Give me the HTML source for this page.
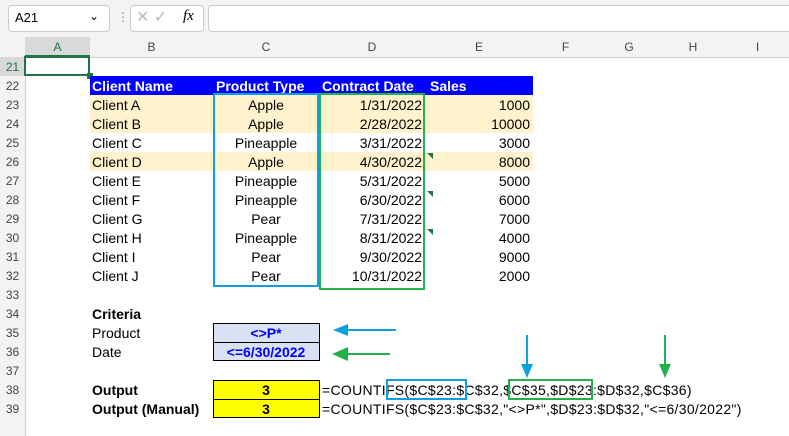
<!DOCTYPE html>
<html><head><style>
body{margin:0;width:789px;height:436px;overflow:hidden;background:#fff;font-family:"Liberation Sans",Arial,sans-serif;position:relative}
.a{position:absolute}
.t{position:absolute;font-size:14px;line-height:19px;white-space:nowrap;margin-top:1px}
.r{text-align:right}.c{text-align:center}.b{font-weight:bold}
.rh{position:absolute;left:0;width:25px;text-align:center;font-size:12px;color:#444;line-height:19px}
.ch{position:absolute;top:37px;height:20px;line-height:20px;text-align:center;font-size:12px;color:#444}
</style></head><body>
<div class="a" style="left:0;top:0;width:789px;height:37px;background:#f3f3f3"></div>
<div class="a" style="left:8px;top:5px;width:100px;height:25px;background:#fff;border:1px solid #ccc;border-radius:4px"></div>
<div class="t" style="left:15px;top:7px;font-size:13px">A21</div>
<div class="t" style="left:89px;top:6px;font-size:12px">&#8964;</div>
<div class="t" style="left:117px;top:7px;color:#888;font-size:12px">⋮</div>
<div class="a" style="left:130px;top:5px;width:72px;height:25px;background:#fff;border:1px solid #ccc;border-radius:4px"></div>
<div class="t" style="left:136px;top:7px;color:#bbb;font-size:16px">✕ ✓</div>
<div class="t" style="left:183px;top:6px;font-family:'Liberation Serif',serif;font-style:italic;font-size:15px">fx</div>
<div class="a" style="left:208px;top:5px;width:585px;height:25px;background:#fff;border:1px solid #ccc;border-radius:4px"></div>
<div class="a" style="left:0;top:37px;width:789px;height:20px;background:#f3f3f3;border-bottom:1px solid #d0d0d0"></div>
<div class="a" style="left:0;top:57px;width:25px;height:379px;background:#f3f3f3;border-right:1px solid #d0d0d0"></div>
<div class="a" style="left:25px;top:37px;width:65px;height:20px;background:#d9d9d9;border-bottom:2px solid #217346;box-sizing:border-box"></div>
<div class="ch" style="left:25px;width:65px;color:#217346">A</div>
<div class="ch" style="left:90px;width:123px">B</div>
<div class="ch" style="left:213px;width:106px">C</div>
<div class="ch" style="left:319px;width:106px">D</div>
<div class="ch" style="left:425px;width:108px">E</div>
<div class="ch" style="left:533px;width:65px">F</div>
<div class="ch" style="left:598px;width:62px">G</div>
<div class="ch" style="left:660px;width:66px">H</div>
<div class="ch" style="left:726px;width:63px">I</div>
<div class="a" style="left:0;top:57px;width:25px;height:19px;background:#d9d9d9"></div>
<div class="rh" style="top:58px;color:#217346">21</div><div class="rh" style="top:77px">22</div><div class="rh" style="top:96px">23</div><div class="rh" style="top:115px">24</div><div class="rh" style="top:134px">25</div><div class="rh" style="top:153px">26</div><div class="rh" style="top:172px">27</div><div class="rh" style="top:191px">28</div><div class="rh" style="top:210px">29</div><div class="rh" style="top:229px">30</div><div class="rh" style="top:248px">31</div><div class="rh" style="top:267px">32</div><div class="rh" style="top:286px">33</div><div class="rh" style="top:305px">34</div><div class="rh" style="top:324px">35</div><div class="rh" style="top:343px">36</div><div class="rh" style="top:362px">37</div><div class="rh" style="top:381px">38</div><div class="rh" style="top:400px">39</div>
<div class="a" style="left:24px;top:56px;width:66px;height:20px;border:2px solid #217346;box-sizing:border-box"></div>
<div class="a" style="left:87px;top:73px;width:6px;height:6px;background:#217346"></div>
<div class="a" style="left:90px;top:76px;width:443px;height:19px;background:#0000ff"></div>
<div class="a" style="left:90px;top:95px;width:443px;height:38px;background:#fff2cc"></div>
<div class="a" style="left:90px;top:152px;width:443px;height:19px;background:#fff2cc"></div>
<div class="t b" style="left:92px;top:76px;color:#fff">Client Name</div>
<div class="t b" style="left:216px;top:76px;color:#fff">Product Type</div>
<div class="t b" style="left:322px;top:76px;color:#fff">Contract Date</div>
<div class="t b" style="left:430px;top:76px;color:#fff">Sales</div>
<div class="t" style="left:92px;top:95px">Client A<br>Client B<br>Client C<br>Client D<br>Client E<br>Client F<br>Client G<br>Client H<br>Client I<br>Client J</div>
<div class="t c" style="left:213px;top:95px;width:106px">Apple<br>Apple<br>Pineapple<br>Apple<br>Pineapple<br>Pineapple<br>Pear<br>Pineapple<br>Pear<br>Pear</div>
<div class="t r" style="left:319px;top:95px;width:103px">1/31/2022<br>2/28/2022<br>3/31/2022<br>4/30/2022<br>5/31/2022<br>6/30/2022<br>7/31/2022<br>8/31/2022<br>9/30/2022<br>10/31/2022</div>
<div class="t r" style="left:425px;top:95px;width:105px">1000<br>10000<br>3000<br>8000<br>5000<br>6000<br>7000<br>4000<br>9000<br>2000</div>
<div class="a" style="left:213px;top:93px;width:106px;height:194px;border:2px solid #0ca0e0;box-sizing:border-box"></div>
<div class="a" style="left:319px;top:93px;width:106px;height:197px;border:2px solid #22b14c;box-sizing:border-box"></div>
<div class="a" style="left:427px;top:153px;border-top:6px solid #217346;border-left:6px solid transparent"></div>
<div class="a" style="left:427px;top:191px;border-top:6px solid #217346;border-left:6px solid transparent"></div>
<div class="a" style="left:427px;top:229px;border-top:6px solid #217346;border-left:6px solid transparent"></div>
<div class="t b" style="left:92px;top:304px">Criteria</div>
<div class="t" style="left:92px;top:323px">Product<br>Date</div>
<div class="a" style="left:213px;top:323px;width:107px;height:38px;background:#d9e1f2;border:1px solid #000;box-sizing:border-box"></div>
<div class="a" style="left:213px;top:342px;width:107px;height:1px;background:#000"></div>
<div class="t b c" style="left:213px;top:323px;width:106px;color:#0000ff">&lt;&gt;P*<br>&lt;=6/30/2022</div>
<div class="a" style="left:213px;top:380px;width:107px;height:38px;background:#ffff00;border:1px solid #000;box-sizing:border-box"></div>
<div class="a" style="left:213px;top:399px;width:107px;height:1px;background:#000"></div>
<div class="t b c" style="left:213px;top:380px;width:106px">3<br>3</div>
<div class="t b" style="left:92px;top:380px">Output<br>Output (Manual)</div>
<div class="t" style="left:322px;top:380px;letter-spacing:0.3px">=COUNTIFS($C$23:$C$32,$C$35,$D$23:$D$32,$C$36)<br>=COUNTIFS($C$23:$C$32,"&lt;&gt;P*",$D$23:$D$32,"&lt;=6/30/2022")</div>
<div class="a" style="left:386px;top:379px;width:81px;height:21px;border:2px solid #0ca0e0;box-sizing:border-box"></div>
<div class="a" style="left:508px;top:379px;width:85px;height:21px;border:2px solid #22b14c;box-sizing:border-box"></div>
<svg class="a" style="left:0;top:0" width="789" height="436">
<line x1="396" y1="330" x2="345" y2="330" stroke="#0ca0e0" stroke-width="2"/><polygon points="333,330 348,324 348,336" fill="#0ca0e0"/>
<line x1="390" y1="354" x2="345" y2="354" stroke="#22b14c" stroke-width="2"/><polygon points="332,354 348,347 348,361" fill="#22b14c"/>
<line x1="527" y1="335" x2="527" y2="366" stroke="#0ca0e0" stroke-width="2"/><polygon points="521,364 533,364 527,378" fill="#0ca0e0"/>
<line x1="665" y1="335" x2="665" y2="366" stroke="#22b14c" stroke-width="2"/><polygon points="659,364 671,364 665,378" fill="#22b14c"/>
</svg>
</body></html>
